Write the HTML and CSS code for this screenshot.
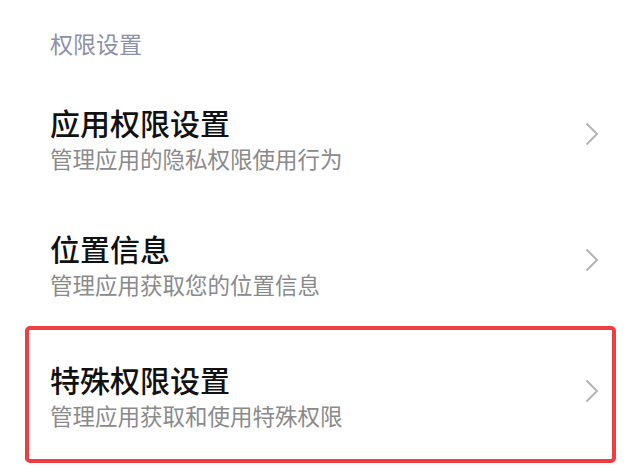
FILE: index.html
```html
<!DOCTYPE html>
<html lang="zh-CN">
<head>
<meta charset="utf-8">
<title>权限设置</title>
<link rel="stylesheet" href="styles.css">
</head>
<body>
<div class="page">
  <div class="section-title">权限设置</div>
  <div class="item">
    <div class="text">
      <div class="title">应用权限设置</div>
      <div class="sub">管理应用的隐私权限使用行为</div>
    </div>
    <svg class="chev" width="14" height="24" viewBox="0 0 14 24"><path d="M1.5 1.5 L12 12 L1.5 22.5" fill="none" stroke="#b4b4b4" stroke-width="2"/></svg>
  </div>
  <div class="item">
    <div class="text">
      <div class="title">位置信息</div>
      <div class="sub">管理应用获取您的位置信息</div>
    </div>
    <svg class="chev" width="14" height="24" viewBox="0 0 14 24"><path d="M1.5 1.5 L12 12 L1.5 22.5" fill="none" stroke="#b4b4b4" stroke-width="2"/></svg>
  </div>
  <div class="item boxed">
    <div class="text">
      <div class="title">特殊权限设置</div>
      <div class="sub">管理应用获取和使用特殊权限</div>
    </div>
    <svg class="chev" width="14" height="24" viewBox="0 0 14 24"><path d="M1.5 1.5 L12 12 L1.5 22.5" fill="none" stroke="#b4b4b4" stroke-width="2"/></svg>
  </div>
</div>
</body>
</html>
```
FILE: styles.css
```css
html, body {
  margin: 0;
  padding: 0;
  background: #ffffff;
}
.page {
  width: 641px;
  height: 475px;
  overflow: hidden;
  font-family: "Noto Sans CJK SC", "Noto Sans", sans-serif;
}
.section-title {
  padding: 28px 50px 19px;
  line-height: 30px;
  font-size: 23px;
  color: #8b91aa;
}
.item {
  display: flex;
  align-items: center;
  justify-content: space-between;
  padding: 27px 42px 27px 50px;
}
.text {
  display: flex;
  flex-direction: column;
}
.title {
  font-size: 30px;
  line-height: 36px;
  font-weight: 500;
  color: #111111;
}
.sub {
  font-size: 22.5px;
  line-height: 36px;
  color: #8a8a8a;
}
.chev {
  margin-bottom: 12px;
}
.item.boxed {
  margin: -3px 25px 0;
  padding: 31px 13px 26px 21px;
  border: 4px solid #ef3e42;
  border-radius: 5px;
}
```
